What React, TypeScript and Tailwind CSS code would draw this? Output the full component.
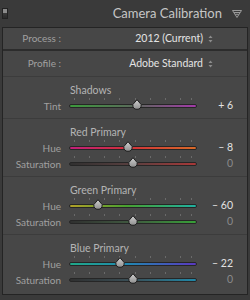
import React from "react";

type Slider = {
  label: string;
  value: string;
  pos: number; // thumb centre, px from track start
  gradient: string;
  dim?: boolean;
};

type Section = {
  title: string;
  sliders: Slider[];
};

const sections: Section[] = [
  {
    title: "Shadows",
    sliders: [
      { label: "Tint", value: "+ 6", pos: 68, gradient: "bg-[linear-gradient(to_right,#3c9a3c,#5a6a5a_50%,#a23aa8)]" },
    ],
  },
  {
    title: "Red Primary",
    sliders: [
      { label: "Hue", value: "\u2013 8", pos: 59, gradient: "bg-[linear-gradient(to_right,#c0207a,#d0303a_45%,#d86a28)]" },
      { label: "Saturation", value: "0", pos: 64, gradient: "bg-[linear-gradient(to_right,#303030,#5a4040_50%,#a83838)]", dim: true },
    ],
  },
  {
    title: "Green Primary",
    sliders: [
      { label: "Hue", value: "\u2013 60", pos: 29, gradient: "bg-[linear-gradient(to_right,#b0a028,#48a030_45%,#20b0a0)]" },
      { label: "Saturation", value: "0", pos: 64, gradient: "bg-[linear-gradient(to_right,#303030,#405a40_50%,#38a038)]", dim: true },
    ],
  },
  {
    title: "Blue Primary",
    sliders: [
      { label: "Hue", value: "\u2013 22", pos: 51, gradient: "bg-[linear-gradient(to_right,#20a888,#2088b0_45%,#5a38c0)]" },
      { label: "Saturation", value: "0", pos: 64, gradient: "bg-[linear-gradient(to_right,#303030,#3a5058_50%,#2088a8)]", dim: true },
    ],
  },
];

const ticks = [5, 20, 35, 50, 66, 81, 96, 111, 122];

function Thumb({ x }: { x: number }) {
  return (
    <svg
      width="10"
      height="11"
      viewBox="0 0 10 11"
      className="absolute top-[-5px]"
      style={{ left: x - 5 }}
    >
      <defs>
        <linearGradient id="thumbFill" x1="0" y1="0" x2="0" y2="1">
          <stop offset="0" stopColor="#d0d0d0" />
          <stop offset="1" stopColor="#8e8e8e" />
        </linearGradient>
      </defs>
      <path
        d="M5 0.7 L9.2 5.6 Q9.3 10.3 5 10.3 Q0.7 10.3 0.8 5.6 Z"
        fill="url(#thumbFill)"
        stroke="#1e1e1e"
        strokeWidth="1"
      />
    </svg>
  );
}

function SliderRow({ slider }: { slider: Slider }) {
  return (
    <div className="flex h-[16px] items-center">
      <div className="w-[58px] text-right text-[10px] text-[#a0a0a0]">{slider.label}</div>
      <div className="relative ml-[8px] h-[4px] w-[128px]">
        {ticks.map((t) => (
          <div key={t} className="absolute top-[-6px] h-[2px] w-px bg-[#6a6a6a]" style={{ left: t }} />
        ))}
        <div className={`h-[4px] w-full rounded-full border border-[#262626] ${slider.gradient}`} />
        <Thumb x={slider.pos} />
      </div>
      <div
        className={`w-[36px] text-right text-[10.5px] ${slider.dim ? "text-[#8a8a8a]" : "text-[#e2e2e2]"}`}
      >
        {slider.value}
      </div>
    </div>
  );
}

function UpDown() {
  return (
    <svg width="5" height="8" viewBox="0 0 5 8" className="ml-[5px]">
      <path d="M2.5 0.5 L4.5 3 L0.5 3 Z" fill="#8c8c8c" />
      <path d="M2.5 7.5 L4.5 5 L0.5 5 Z" fill="#8c8c8c" />
    </svg>
  );
}

export default function App() {
  return (
    <div
      className="h-[300px] w-[250px] overflow-hidden bg-[#3a3a3a]"
      style={{ fontFamily: 'Lato, "Open Sans", sans-serif' }}
    >
      {/* header */}
      <div className="flex h-[27px] items-center">
        <div className="ml-[2px] h-[11px] w-[6px] bg-[linear-gradient(to_bottom,#8a8a8a,#8a8a8a_45%,#3a3a3a_45%,#2a2a2a)] border border-[#222]" />
        <div className="ml-auto text-[13px] text-[#c6c6c6]">Camera Calibration</div>
        <svg width="10" height="8" viewBox="0 0 10 8" className="ml-[10px] mr-[8px]">
          <path d="M0.5 0.5 H9.5 L5 7.5 Z" fill="none" stroke="#9a9a9a" strokeWidth="1" />
          <path d="M2 2.5 H8 M3.2 4.3 H6.8" stroke="#9a9a9a" strokeWidth="1" />
        </svg>
      </div>

      {/* panel */}
      <div className="mx-[2px] h-[268px] border border-[#242424] bg-[#474747]">
        <div className="flex h-[23px] items-center border-b-2 border-[#2c2c2c]">
          <div className="w-[58px] text-right text-[10px] text-[#a0a0a0]">Process :</div>
          <div className="ml-auto text-[10.5px] text-[#e4e4e4]">2012 (Current)</div>
          <UpDown />
          <div className="w-[34px]" />
        </div>
        <div className="flex h-[26px] items-center border-b border-[#3c3c3c]">
          <div className="w-[58px] text-right text-[10px] text-[#a0a0a0]">Profile :</div>
          <div className="ml-auto text-[10.5px] text-[#e4e4e4]">Adobe Standard</div>
          <UpDown />
          <div className="w-[34px]" />
        </div>

        {sections.map((s, i) => (
          <div
            key={s.title}
            className={`pt-[6px] pb-[4px] ${i < sections.length - 1 ? "border-b border-[#3c3c3c]" : ""}`}
          >
            <div className="flex h-[15px] items-center pl-[67px] text-[10.5px] text-[#b4b4b4]">{s.title}</div>
            {s.sliders.map((sl) => (
              <SliderRow key={s.title + sl.label} slider={sl} />
            ))}
          </div>
        ))}
      </div>
    </div>
  );
}
